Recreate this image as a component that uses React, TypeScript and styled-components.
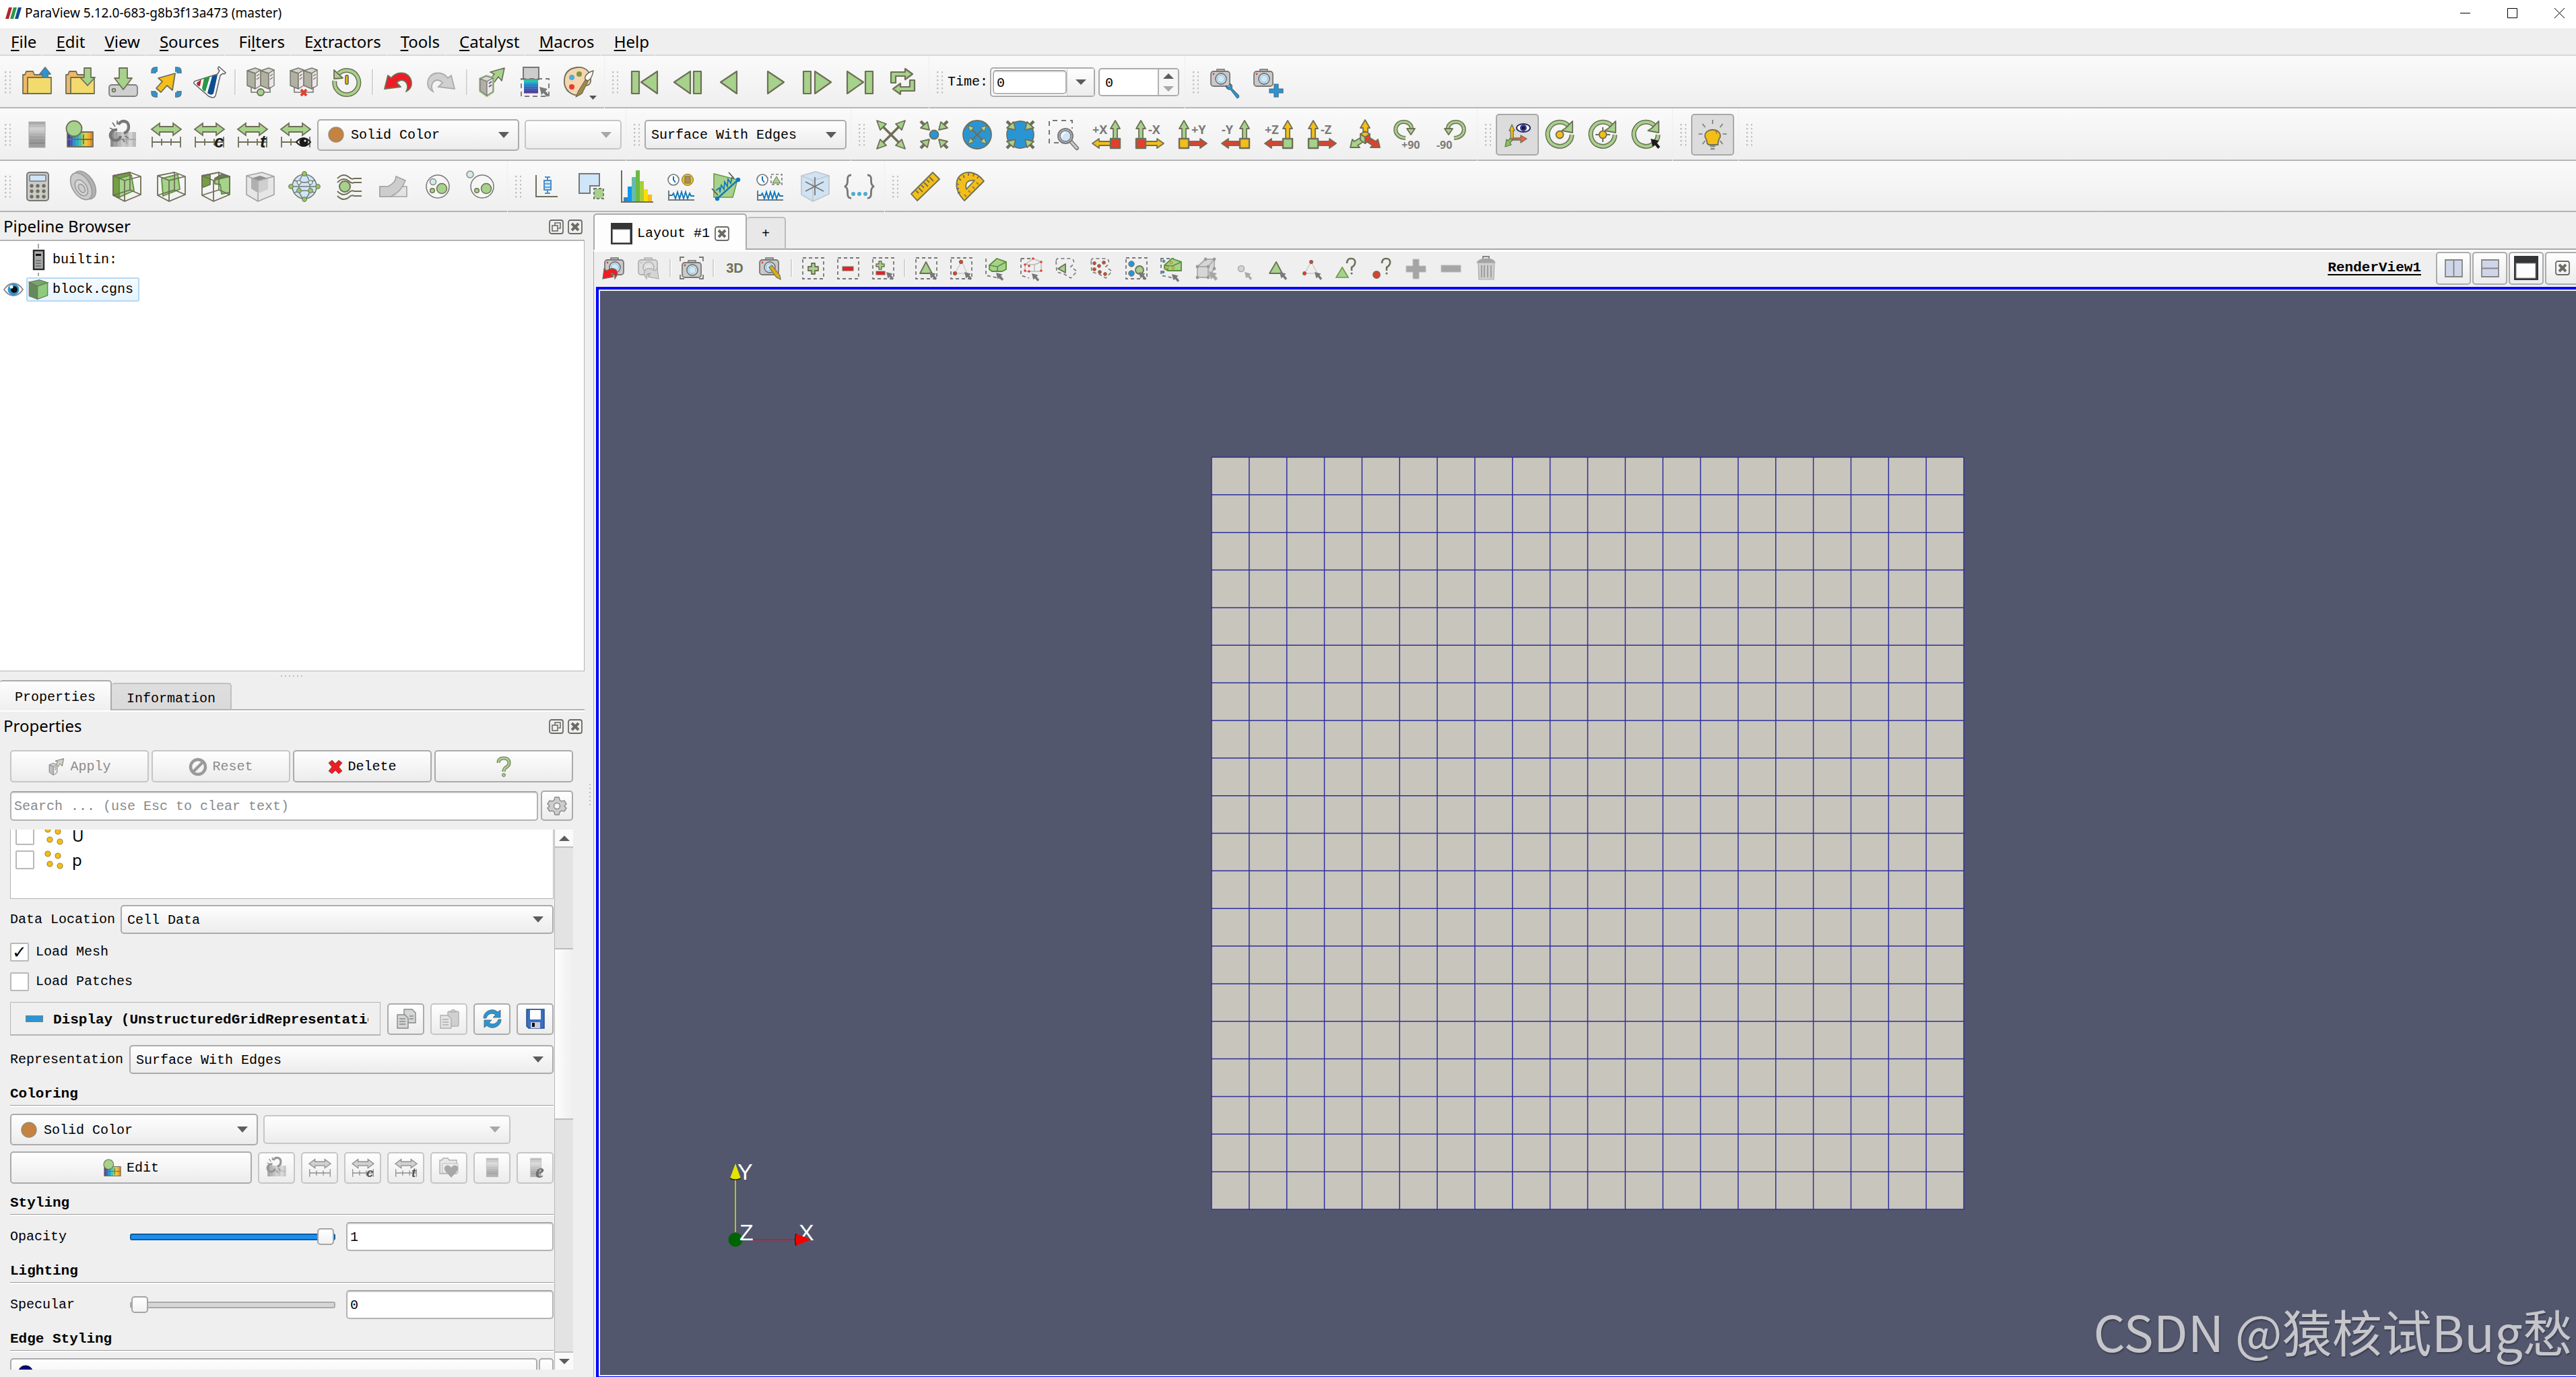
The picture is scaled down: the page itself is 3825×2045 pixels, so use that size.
import React from "react";
import styled, { createGlobalStyle, css } from "styled-components";

const OL = "#6f6f58";
const GR = "#a6d28b";
const BL = "#2a95d5";
const YE = "#f4be18";
const RE = "#e23f2e";
const MONO = `"Liberation Mono", "Noto Sans CJK SC", monospace`;
const UI = `"Noto Sans", "Open Sans", "Noto Sans CJK SC", sans-serif`;

const Global = createGlobalStyle`
  * { box-sizing: border-box; }
  html, body { margin: 0; padding: 0; }
  body { background: #efefef; color: #000; font-family: ${MONO}; font-size: 20px; line-height: 24px; }
  button, input, select { font: inherit; color: inherit; margin: 0; }
`;

/* ---------- shell ---------- */

const Window = styled.div`
  display: flex;
  flex-direction: column;
  height: 100vh;
  overflow: hidden;
  background: #efefef;
`;

const TitleBar = styled.header`
  display: flex;
  align-items: center;
  height: 42px;
  flex: none;
  padding: 0 0 4px 8px;
  gap: 5px;
  background: #fff;
  font-family: ${UI};
`;

const TitleText = styled.h1`
  margin: 0;
  flex: 1;
  font-size: 19px;
  font-weight: 400;
`;

const WindowButton = styled.button`
  width: 65px;
  height: 38px;
  padding: 0;
  border: 0;
  background: none;
  display: flex;
  align-items: center;
  justify-content: center;
  &:last-child { width: 50px; margin-left: 7px; }
`;

const MenuBar = styled.nav`
  display: flex;
  flex: none;
  height: 41px;
  font-family: ${UI};
  font-size: 24px;
`;

const MenuItem = styled.button`
  border: 0;
  border-bottom: 2px solid #d8d8d8;
  background: none;
  margin-right: 1px;
  padding: 0 8px 0 20px;
  &:first-child { padding-left: 16px; }
  u { text-underline-offset: 3px; text-decoration-thickness: 2px; }
`;

const MenuFill = styled.div`
  flex: 1;
  border-bottom: 2px solid #d8d8d8;
`;

const ToolRow = styled.div<{ $short?: boolean }>`
  display: flex;
  flex: none;
  height: ${(p) => (p.$short ? 76 : 78)}px;
`;

const Group = styled.div<{ $wide?: boolean }>`
  display: flex;
  align-items: center;
  padding: 2px ${(p) => (p.$wide ? 4 : 6)}px 0 11px;
  margin-right: 1px;
  border-bottom: 2px solid #b5b5b5;
  background: linear-gradient(#fafafa, #efefef);
  &:first-child { padding-left: 7px; }
  &:last-child { flex: 1; margin-right: 0; }
  --tool: ${(p) => (p.$wide ? 66 : 64)}px;
`;

const Handle = styled.span`
  flex: none;
  width: 9px;
  height: 33px;
  margin-right: 7px;
  background-image: radial-gradient(circle at 1px 1px, #c0c0c0 1px, transparent 2px);
  background-size: 7px 6px;
`;

const ToolButton = styled.button<{ $on?: boolean }>`
  flex: none;
  width: var(--tool);
  height: 62px;
  padding: 0;
  display: flex;
  align-items: center;
  justify-content: center;
  border: 2px solid transparent;
  border-radius: 5px;
  background: none;
  ${(p) => p.$on && css`border-color: #a9a9a9; background: #dcdcdc;`}
`;

const Divider = styled.span<{ $h?: number }>`
  flex: none;
  width: 12px;
  height: ${(p) => p.$h || 38}px;
  background: linear-gradient(90deg, transparent 5px, #d3d3d3 5px, #d3d3d3 7px, #fff 7px, #fff 8px, transparent 8px);
`;

const Icon = styled.svg`
  display: block;
  flex: none;
  overflow: visible;
`;

/* ---------- form parts ---------- */

const raised = css`
  border: 2px solid #ababab;
  border-radius: 5px;
  background: linear-gradient(#fefefe, #ececec);
`;

const SelectBox = styled.div<{ $w?: number; $h?: number; $off?: boolean }>`
  display: grid;
  grid-template-columns: minmax(0, 1fr);
  align-items: center;
  flex: ${(p) => (p.$w ? "none" : "1")};
  width: ${(p) => (p.$w ? p.$w + "px" : "auto")};
  height: ${(p) => p.$h || 44}px;
  ${raised}
  ${(p) => p.$off && css`border-color: #c6c6c6;`}
  > * { grid-area: 1 / 1; }
  > svg { margin-left: 14px; pointer-events: none; }
  &::after {
    content: "";
    grid-area: 1 / 1;
    justify-self: end;
    margin-right: 13px;
    border: 8px solid transparent;
    border-bottom: 0;
    border-top: 9px solid ${(p) => (p.$off ? "#a8a8a8" : "#5c5c5c")};
    pointer-events: none;
  }
`;

const Select = styled.select<{ $inset?: number }>`
  appearance: none;
  width: 100%;
  height: 100%;
  border: 0;
  background: none;
  padding: 2px 32px 0 ${(p) => p.$inset || 8}px;
`;

const Dot = () => (
  <Icon width="24" height="24" viewBox="0 0 24 24"><circle cx="12" cy="12" r="11" fill="#c58240" stroke="#9a8c76" strokeWidth="1.5" /></Icon>
);

const Combo = ({ label, value, w, h, off, dot }: any) => (
  <SelectBox $w={w} $h={h} $off={off}>
    <Select aria-label={label} id={label} disabled={off} $inset={dot ? 48 : 8} defaultValue={value}>
      <option>{value}</option>
    </Select>
    {dot && <Dot />}
  </SelectBox>
);

const Field = styled.input<{ $w?: number; $h?: number }>`
  width: ${(p) => (p.$w ? p.$w + "px" : "auto")};
  height: ${(p) => p.$h || 43}px;
  flex: ${(p) => (p.$w ? "none" : "1")};
  min-width: 0;
  padding: 2px 4px 0;
  border: 2px solid #b3b3b3;
  border-top-color: #a3a3a3;
  border-radius: 5px;
  background: #fff;
  box-shadow: inset 0 2px 0 #f0f0f0;
  &::placeholder { color: #8a8a8a; opacity: 1; }
`;

const Button = styled.button`
  ${raised}
  display: flex;
  align-items: center;
  justify-content: center;
  gap: 7px;
  flex: 1;
  height: 48px;
  padding: 2px 0 0;
  &:disabled { border-color: #c6c6c6; color: #8c8c8c; }
`;

const SmallButton = styled(Button)`
  flex: none;
  width: 55px;
  height: 47px;
  padding: 0;
  &:disabled svg { filter: grayscale(1); opacity: 0.75; }
`;

const GearButton = styled(SmallButton)`
  width: 48px;
  height: 45px;
`;

const CheckBox = styled.input.attrs({ type: "checkbox" })`
  appearance: none;
  flex: none;
  width: 28px;
  height: 28px;
  border: 2px solid #b9b9b9;
  border-radius: 2px;
  background: #fff;
  display: grid;
  place-items: center;
  &:checked::after { content: "✓"; font: bold 26px/20px "DejaVu Sans", sans-serif; }
`;

const TimeBox = styled.div`
  display: flex;
  align-items: center;
  width: 156px;
  height: 44px;
  margin: 0 5px 0 3px;
  padding-left: 2px;
  ${raised}
  background: #fff;
`;

const TimeDrop = styled.button`
  flex: 1;
  height: 40px;
  padding: 0;
  border: 0;
  border-left: 1px solid #c8c8c8;
  background: linear-gradient(#fefefe, #ececec);
  display: grid;
  place-items: center;
`;

const Spin = styled.div`
  display: flex;
  width: 120px;
  height: 42px;
  margin-right: 2px;
  ${raised}
  background: #fff;
  overflow: hidden;
`;

const SpinInput = styled.input`
  flex: 1;
  min-width: 0;
  border: 0;
  padding: 4px 8px 0;
  background: none;
`;

const SpinArrows = styled.div`
  display: grid;
  width: 30px;
  border-left: 2px solid #b4b4b4;
  background: #f6f6f6;
`;

const SpinButton = styled.button`
  border: 0;
  padding: 0;
  background: none;
  display: grid;
  place-items: center;
`;

const Tri = ({ up, c = "#5c5c5c", s = 16 }: any) => (
  <Icon width={s} height={s / 2} viewBox="0 0 16 8"><path d={up ? "M8 0l8 8H0z" : "M0 0h16l-8 8z"} fill={c} /></Icon>
);

/* ---------- docks ---------- */

const Body = styled.div`
  display: flex;
  flex: 1;
  min-height: 0;
`;

const Dock = styled.aside`
  display: flex;
  flex-direction: column;
  flex: none;
  width: 868px;
`;

const Pane = styled.section<{ $grow: number }>`
  display: flex;
  flex-direction: column;
  flex: ${(p) => p.$grow} 1 0;
  min-height: 0;
`;

const PaneHead = styled.div`
  display: flex;
  align-items: center;
  flex: none;
  height: 41px;
  gap: 6px;
  padding: 2px 3px 0 5px;
`;

const PaneTitle = styled.h2`
  flex: 1;
  margin: 0;
  padding-bottom: 1px;
  font-family: ${UI};
  font-size: 24px;
  font-weight: 400;
`;

const TinyButton = styled.button`
  display: block;
  flex: none;
  padding: 0;
  border: 0;
  background: none;
`;

const Tree = styled.ul`
  flex: 1;
  margin: 0;
  padding: 10px 0 0;
  list-style: none;
  border: solid #b5b5b5;
  border-width: 2px 1px 1px 0;
  background: #fff;
`;

const TreeRow = styled.li`
  display: flex;
  align-items: center;
  height: 36px;
  margin-bottom: 8px;
  padding-left: 5px;
`;

const EyeSlot = styled.span`
  width: 34px;
`;

const TreeItem = styled.span<{ $on?: boolean }>`
  display: flex;
  align-items: center;
  gap: 6px;
  height: 36px;
  padding: 0 7px 0 1px;
  border: 2px solid transparent;
  border-radius: 3px;
  ${(p) => p.$on && css`border-color: #b5d8f3; background: linear-gradient(#f6fbff, #e6f4ff);`}
`;

const SplitterH = styled.div`
  display: grid;
  place-items: center;
  flex: none;
  height: 13px;
  &::before {
    content: "";
    width: 34px;
    height: 2px;
    background: repeating-linear-gradient(90deg, #bdbdbd 0 2px, transparent 2px 6px);
  }
`;

const SplitterV = styled.div`
  display: grid;
  align-content: center;
  justify-content: end;
  padding-right: 4px;
  flex: none;
  width: 13px;
  &::before {
    content: "";
    width: 2px;
    height: 33px;
    background: repeating-linear-gradient(#bdbdbd 0 2px, transparent 2px 6px);
  }
`;

const Tabs = styled.div`
  display: flex;
  align-items: flex-end;
  flex: none;
  height: 47px;
  border-bottom: 2px solid #fff;
  box-shadow: inset 0 -2px 0 #b5b5b5;
`;

const Tab = styled.button<{ $on?: boolean; $w: number }>`
  width: ${(p) => p.$w}px;
  height: 45px;
  padding: 4px 0 0;
  border: 2px solid #ababab;
  border-left-width: 0;
  border-bottom: 0;
  border-radius: 4px 5px 0 0;
  background: linear-gradient(#fdfdfd, #efefef);
  ${(p) => !p.$on && css`
    height: 41px;
    padding-top: 6px;
    border-color: #c0c0c0;
    border-bottom: 2px solid #b5b5b5;
    background: linear-gradient(#dedede, #dadada);
  `}
`;

const Stack = styled.div`
  display: flex;
  flex-direction: column;
  flex: 1;
  min-height: 0;
  padding: 16px 17px 11px 15px;
`;

const Row = styled.div<{ $gap?: number; $mt?: number }>`
  display: flex;
  align-items: center;
  flex: none;
  gap: ${(p) => p.$gap ?? 4}px;
  margin-top: ${(p) => p.$mt ?? 0}px;
`;

const Scroll = styled.div`
  display: flex;
  flex: 1;
  min-height: 0;
  margin-top: 13px;
  overflow: hidden;
`;

const ScrollBody = styled.div`
  flex: 1;
  min-width: 0;
  overflow: hidden;
`;

const Bar = styled.div`
  display: flex;
  flex-direction: column;
  flex: none;
  width: 28px;
  margin-left: 1px;
  border-left: 1px solid #b5b5b5;
  background: #e3e3e3;
`;

const BarEnd = styled.button`
  display: grid;
  place-items: center;
  flex: none;
  height: 27px;
  padding: 0;
  border: 0;
  border-bottom: 2px solid #bdbdbd;
  background: #fafafa;
  &:last-child { border-bottom: 0; border-top: 2px solid #bdbdbd; }
`;

const Thumb = styled.div`
  flex: 252 1 0;
  border: solid #bdbdbd;
  border-width: 2px 0;
  background: linear-gradient(90deg, #fdfdfd, #efefef);
`;

const Gap = styled.div<{ $grow: number }>`
  flex: ${(p) => p.$grow} 1 0;
`;

const ArrayList = styled.div`
  display: flex;
  flex-direction: column;
  justify-content: flex-end;
  height: 103px;
  padding: 0 0 39px 7px;
  overflow: hidden;
  border: solid #b5b5b5;
  border-width: 0 1px 1px;
  background: #fff;
`;

const ArrayRow = styled.label`
  display: flex;
  align-items: center;
  flex: none;
  height: 36px;
  gap: 14px;
  font-family: ${UI};
  font-size: 24px;
`;

const CheckRow = styled.label`
  display: flex;
  align-items: center;
  height: 44px;
  gap: 10px;
`;

const Fill = styled.div`
  flex: 1;
`;

const Section = styled.h3`
  margin: 0;
  padding-bottom: 3px;
  font-size: 21px;
  line-height: 26px;
  font-weight: 700;
  border-bottom: 1px solid #9d9d9d;
  box-shadow: 0 2px 0 #fff;
`;

const Expander = styled.button`
  display: flex;
  align-items: center;
  gap: 15px;
  flex: 1;
  min-width: 0;
  height: 50px;
  padding: 0 17px 0 22px;
  margin-right: 1px;
  border: 1px solid #b5b5b5;
  border-bottom-width: 2px;
  background: none;
  font-size: 21px;
  font-weight: 700;
  white-space: nowrap;
  span { overflow: hidden; padding-top: 4px; }
`;

const SliderLabel = styled.label`
  width: 178px;
  flex: none;
`;

const Slider = styled.input.attrs({ type: "range" })<{ $full?: boolean }>`
  appearance: none;
  flex: none;
  width: 305px;
  height: 26px;
  margin: 0 16px 0 0;
  background: none;
  &::-webkit-slider-runnable-track {
    height: 10px;
    border: 2px solid ${(p) => (p.$full ? "#0a5c9e" : "#ababab")};
    border-radius: 3px;
    background: ${(p) => (p.$full ? "#1d8df0" : "#d6d6d6")};
  }
  &::-webkit-slider-thumb {
    appearance: none;
    width: 25px;
    height: 25px;
    margin-top: -10px;
    border: 2px solid #a5a5a5;
    border-radius: 5px;
    background: linear-gradient(#fff, #f1f1f1);
  }
`;

const EdgeDot = styled.svg`
  align-self: flex-start;
  margin: 6px auto 0 9px;
`;

const EdgeMore = styled(Button)`
  flex: none;
  width: 22px;
`;

/* ---------- render view ---------- */

const Main = styled.main`
  display: flex;
  flex-direction: column;
  flex: 1;
  min-width: 0;
`;

const ViewTabs = styled.div`
  display: flex;
  align-items: flex-end;
  flex: none;
  height: 56px;
  box-shadow: inset 0 -2px 0 #a9a9a9;
`;

const ViewTab = styled.div<{ $on?: boolean }>`
  display: flex;
  align-items: center;
  justify-content: center;
  gap: 7px;
  height: ${(p) => (p.$on ? 54 : 49)}px;
  width: ${(p) => (p.$on ? 228 : 58)}px;
  padding-top: ${(p) => (p.$on ? 4 : 2)}px;
  border: 2px solid ${(p) => (p.$on ? "#ababab" : "#bdbdbd")};
  border-radius: 5px 5px 0 0;
  border-bottom: ${(p) => (p.$on ? "0" : "2px solid #a9a9a9")};
  border-left-width: ${(p) => (p.$on ? 2 : 0)}px;
  background: ${(p) => (p.$on ? "#fdfdfd" : "#e8e8e8")};
`;

const Frame = styled.div`
  display: flex;
  flex-direction: column;
  flex: 1;
  min-height: 0;
  border-left: 1px solid #a9a9a9;
  border-top: 3px solid #fdfdfd;
  padding-left: 3px;
`;

const ViewTools = styled.div`
  display: flex;
  align-items: center;
  flex: none;
  height: 52px;
  padding-bottom: 4px;
  overflow: hidden;
`;

const ViewTool = styled.button`
  display: grid;
  place-items: center;
  flex: none;
  width: 52px;
  height: 46px;
  padding: 0;
  border: 0;
  background: none;
  color: ${OL};
  font: bold 20px/24px "Liberation Sans", sans-serif;
`;

const ViewName = styled.a`
  margin-left: auto;
  margin-right: 22px;
  color: #000;
  font-weight: 700;
  font-size: 21px;
  text-decoration-thickness: 2px;
  text-underline-offset: 4px;
`;

const FrameButton = styled(Button)`
  flex: none;
  width: 52px;
  height: 49px;
  padding: 0;
  margin-right: 2px;
  &:last-child { margin-right: -6px; }
`;

const Viewport = styled.div`
  position: relative;
  flex: 1;
  min-height: 0;
  border: 4px solid #0000fe;
  border-width: 4px 0 1px 4px;
  box-shadow: inset 2px 2px 0 #f0f0f4, inset 0 -2px 0 #f0f0f4;
  background: #52576e;
  display: flex;
  align-items: center;
  justify-content: center;
  overflow: hidden;
`;

const Axes = styled.svg`
  position: absolute;
  left: 171px;
  bottom: 184px;
  overflow: visible;
`;

const Watermark = styled.div`
  position: absolute;
  right: 5px;
  bottom: 16px;
  font: 400 74px/104px "Noto Sans CJK SC", sans-serif;
  color: #c6c6ca;
  text-shadow: 1px 2px 2px rgba(40, 42, 56, 0.6);
  white-space: nowrap;
`;

/* ---------- icon drawings (44 x 44) ---------- */

const st = { stroke: OL, strokeWidth: 1.8, strokeLinejoin: "round" as const };
const Arc = ({ d, w = 4.5, c = GR }: any) => (
  <g fill="none"><path d={d} stroke={OL} strokeWidth={w + 3} /><path d={d} stroke={c} strokeWidth={w} /></g>
);
const Cursor = ({ x, y, s = 1, c = "#787878" }: any) => (
  <path transform={`translate(${x} ${y}) scale(${s})`} fill={c} d="M0 0l12 3-3 3 5 6-3 3-5-6-3 3z" />
);
const Clock = ({ x, y, r = 8 }: any) => (
  <g fill="none"><circle cx={x} cy={y} r={r} fill="#fff" stroke="#777" strokeWidth="1.6" /><path d={`M${x} ${y - 5}v5l3 4`} stroke="#0f74bd" strokeWidth="2" /></g>
);
const Wave = ({ y = 28 }: any) => (
  <g fill="none"><path d={`M3 ${y}v14h38`} stroke="#777" strokeWidth="2" /><path d={`M4 ${y + 7}h4l2-3 3 8 3-10 3 10 3-10 3 10 3-10 3 10 3-8 2 4h5`} stroke="#1277bd" strokeWidth="1.9" /></g>
);
const Camera = ({ x = 0, y = 4, off }: any) => (
  <g transform={`translate(${x} ${y})`} opacity={off ? 0.5 : 1}>
    <rect x="10" y="-1" width="11" height="5" fill="#c6c6c6" stroke="#777" strokeWidth="1.6" />
    <rect x="1" y="2" width="28" height="22" rx="4" fill="#cacaca" stroke="#777" strokeWidth="1.8" />
    <circle cx="16" cy="13" r="8" fill="#f2f2f2" stroke="#777" strokeWidth="1.8" />
    <circle cx="16" cy="13" r="5.4" fill={off ? "#ddd" : "#cfe7fa"} stroke={off ? "#aaa" : "#6bb8dd"} />
    <circle cx="5" cy="6" r="1.4" fill={off ? "#999" : RE} />
  </g>
);
const Server = ({ x = 0 }: any) => (
  <g transform={`translate(${x} 0)`} stroke="#777767" strokeWidth="1.4" strokeLinejoin="round">
    <path d="M2 5l12-4 8 3-8 5z" fill="#d4d4d4" /><path d="M2 5l12 4v23L2 27z" fill="#b0b0a3" /><path d="M14 9l8-5v23l-8 5z" fill="#eee6ea" />
    <path d="M16 13l4-3M16 18l4-3" />
  </g>
);
const MiniServer = ({ c = GR, g = "#b0b0a3" }: any) => (
  <g>
    <path d="M14 23L25 10l-6-3 21-6-4 19-5-6-9 12z" fill={c} {...st} strokeWidth="1.6" />
    <path d="M4 17l9-4 10 3v20l-9 6-10-7z" fill="none" stroke={c} strokeWidth="4" strokeLinejoin="round" />
    <path d="M4 17l9-4 10 3-9 5z" fill="#d8d8d8" stroke="#777" strokeWidth="1.2" /><path d="M4 17l10 4v21L4 35z" fill={g} stroke="#777" strokeWidth="1.2" /><path d="M14 21l9-5v20l-9 6z" fill="#eee8ea" stroke="#777" strokeWidth="1.2" />
    <path d="M17 24l4-3M17 29l4-3" stroke="#555" strokeWidth="1.6" />
  </g>
);
const DoubleArrow = ({ c = GR, o = OL }: any) => (
  <g>
    <path d="M0 14L12 5v5h20V5l12 9-12 9v-5H12v5z" fill={c} stroke={o} strokeWidth="1.8" />
    <path d="M1 33h42M1 25v16M43 25v16M15 28v10M29 28v10" stroke={o} strokeWidth="1.8" fill="none" />
  </g>
);
const Letter = ({ t, x = 31 }: any) => (
  <text x={x} y="41" fontFamily="Liberation Sans" fontWeight="700" fontStyle="italic" fontSize="26" fill="#1e1e1e">{t}</text>
);
const Rainbow = () => (
  <g>
    {["#4a3a9a", "#3a5fb8", "#2a8fd0", "#25b0c8", "#5bbf9a", "#a6cb60", "#e0cc3c", "#f2ae28", "#e88828"].map((c, i) => (
      <rect key={c} x={3 + i * 4.2} y="18" width="4.4" height="22" fill={c} />
    ))}
    <rect x="3" y="18" width="38" height="22" fill="none" {...st} />
    <path d="M3 29h38M27 22v14" stroke={OL} strokeWidth="1.8" />
    <circle cx="13" cy="13" r="11.5" fill={GR} {...st} />
  </g>
);
const Chain = () => (
  <g fill="none">
    {[0, 1, 2, 3, 4, 5, 6].map((i) => <rect key={i} x={3 + i * 5.4} y="18" width="5.6" height="22" fill={["#8f8f8f", "#a2a2a2", "#b6b6b6", "#c9c9c9", "#c0c0c0", "#d2d2d2", "#bcbcbc"][i]} />)}
    <path d="M3 29h38M27 22v14" stroke="#a0a0a0" strokeWidth="1.6" />
    <path d="M15 7c4-8 16-6 15 4 0 5-4 8-7 9M13 15C5 14 0 22 5 28c5 5 12 2 13-4" stroke="#777" strokeWidth="4.4" />
    <path d="M2 12l6 3M6 4l4 6M13 1v6M24 24l6 3M21 28l3 5" stroke="#777" strokeWidth="1.8" />
  </g>
);
const LutBar = ({ x = 10, w = 24 }: any) => (
  <g>
    {[0, 1, 2, 3, 4, 5, 6, 7, 8].map((i) => <rect key={i} x={x} y={3 + i * 4.2} width={w} height="4.4" fill={["#ababab", "#bdbdbd", "#cfcfcf", "#c4c4c4", "#b2b2b2", "#a4a4a4", "#989898", "#8c8c8c", "#9c9c9c"][i]} />)}
    <rect x={x} y="3" width={w} height="38" fill="none" stroke="#a8a8a8" />
  </g>
);
const Flip = ({ children }: any) => <g transform="translate(44 0) scale(-1 1)">{children}</g>;
const Corners = ({ children }: any) => (
  <g>
    {children}
    <g transform="translate(44 0) scale(-1 1)">{children}</g>
    <g transform="translate(0 44) scale(1 -1)">{children}</g>
    <g transform="translate(44 44) scale(-1 -1)">{children}</g>
  </g>
);
const OutArrow = () => <g><path d="M22 22L7 7" stroke={OL} strokeWidth="3.6" /><path d="M1 1l14 5-9 9z" fill={GR} {...st} /></g>;
const InArrow = () => <g><path d="M2 2l6 6" stroke={OL} strokeWidth="4.5" /><path d="M15 15L2 12 12 3z" fill={GR} {...st} /></g>;
const ViewDir = ({ t, left, up, box, out }: any) => {
  const art = (
    <g {...st}>
      <path d="M1 35l10-7v4h17v6H11v4z" fill={out} />
      <path d="M35 1l7 12h-4v15h-6V13h-4z" fill={up} />
      <rect x="28" y="28" width="14" height="14" fill={box} strokeWidth="2.4" />
    </g>
  );
  return (
    <g>
      {left ? art : <Flip>{art}</Flip>}
      <text x={left ? 1 : 20} y="21" fontFamily="Noto Sans" fontWeight="700" fontSize="18" fill="#7c7c7c">{t}</text>
    </g>
  );
};
const Swirl = ({ children }: any) => (
  <g><Arc d="M35 10A18 18 0 1 0 39 22" w={4} /><path d="M40 2v17l-16-3 6-4z" fill={GR} {...st} />{children}</g>
);
const cubeWire = "M2 6l25-5 16 6v27L19 44 2 35zM2 6l17 7 24-6M19 13v31M27 1v26M2 35l25-8 16 7";

const I: Record<string, React.ReactNode> = {
  open: <g {...st}><path d="M1 39V11h3l2-5h10l2 5h13v28z" fill="#f0b865" /><rect x="8" y="15" width="35" height="24" fill="#f3da6d" /><path d="M34 0l8 10h-4v5h-8v-5h-4z" fill={BL} stroke="#5d7b80" /></g>,
  recent: <g {...st}><path d="M1 39V11h3l2-5h10l2 5h13v28z" fill="#f0b865" /><rect x="8" y="15" width="35" height="24" fill="#f3da6d" /><path d="M28 1h10v14h6L33 27 22 15h6z" fill={GR} /></g>,
  save: <g {...st}><rect x="1" y="26" width="42" height="17" rx="4" fill="#d0d0d0" stroke="#808080" /><circle cx="8" cy="34" r="2.4" fill="none" /><path d="M16 1h12v15h7L22 33 9 16h7z" fill={GR} /></g>,
  full: <g><Corners><path d="M3 9V6q0-3 3-3h3" fill="none" stroke={OL} strokeWidth="7.4" /><path d="M3 8.500V6q0-3 3-3h2.500" fill="none" stroke={BL} strokeWidth="5" /></Corners><path d="M35 9L10 16l6 5-9 10 7 6 9-10 8 7z" fill={YE} {...st} /></g>,
  flask: <g><path d="M36-1l10 9q-2 3-4 1l-4 3-7 30q-2 5-10 1L-1 24q-1-3 3-4l32-10 3-5q-4-3-1-6z" fill="#fff" stroke="#666" strokeWidth="1.6" /><path d="M3 23l7-5-2 10q-5 0-5-5z" fill="#b5242c" /><path d="M14 16l9-3-7 23q-4-1-5-5z" fill="#2b9747" /><path d="M26 13l8-2-6 28q-4 4-9-1z" fill="#0f4d91" /></g>,
  connect: <g><Server /><Server x={20} /><path d="M8 29v8h28v-8" fill="none" stroke="#777" strokeWidth="1.6" /><circle cx="22" cy="37" r="5" fill={GR} {...st} /></g>,
  disconnect: <g><Server /><Server x={20} /><path d="M8 29v8h28v-8" fill="none" stroke="#777" strokeWidth="1.6" /><path d="M18 33l8 9M26 33l-8 9" stroke={RE} strokeWidth="4" /></g>,
  reload: <g><Arc d="M10 9A18 18 0 1 1 4 20" w={4} /><path d="M3 17V4l13 12z" fill={GR} {...st} /><rect x="20" y="12" width="4" height="13" rx="1.500" fill={YE} {...st} /></g>,
  undo: <path d="M2 32L7 12l5 4C21 3 42 7 42 24c0 7-4 10-8 12 5-9 0-17-7-17-4 0-5 2-7 4l6 6z" fill="#ee1c25" {...st} />,
  redo: <Flip><path d="M2 32L7 12l5 4C21 3 42 7 42 24c0 7-4 10-8 12 5-9 0-17-7-17-4 0-5 2-7 4l6 6z" fill="#d0d0d0" stroke="#ababab" strokeWidth="1.800" /></Flip>,
  apply: <MiniServer />,
  search: <g><rect x="4" y="0" width="23" height="18" fill="#cccdcd" stroke="#777" strokeWidth="2" />{["#2bc0a0", "#23a5c4", "#1f86c8", "#2a6cb8", "#4a52a8", "#5c3c98"].map((c, i) => <rect key={c} x="5" y={18 + i * 3.4} width="21" height="3.600" fill={c} />)}<path d="M1 17h41v26H1z" fill="none" stroke="#777" strokeWidth="1.800" strokeDasharray="7 5" /><Cursor x={28} y={29} c="#7a7a7a" /></g>,
  palette: <g><path d="M20 0C4 2 0 12 1 24c2 14 18 22 26 14 3-3-2-6 0-9 3-3 12 0 13-8C41 8 34-1 20 0z" fill="#f5d6b0" {...st} /><circle cx="23" cy="10" r="4" fill="#7d9a42" /><circle cx="12" cy="15" r="4" fill="#45b2de" /><circle cx="12" cy="29" r="4" fill={RE} /><path d="M18 44l4-9 10-16 4 2-9 18z" fill="#a58845" {...st} strokeWidth="1.300" /><path d="M32 18q-2-8 12-13-2 12-8 15z" fill="#fff" {...st} strokeWidth="1.500" /><path d="M38 42h11l-5.500 6z" fill="#555" /></g>,
  first: <g fill={GR} {...st} strokeWidth="2.200"><rect x="3" y="6" width="11" height="33" /><path d="M17 22L41 6v33z" /></g>,
  prev: <g fill={GR} {...st} strokeWidth="2.200"><rect x="31" y="6" width="11" height="33" /><path d="M2 22L26 6v33z" /></g>,
  back: <path d="M7 22L31 6v33z" fill={GR} {...st} strokeWidth="2.200" />,
  play: <path d="M37 22L13 6v33z" fill={GR} {...st} strokeWidth="2.200" />,
  next: <g fill={GR} {...st} strokeWidth="2.200"><rect x="2" y="6" width="11" height="33" /><path d="M43 22L19 6v33z" /></g>,
  last: <g fill={GR} {...st} strokeWidth="2.200"><rect x="30" y="6" width="11" height="33" /><path d="M27 22L3 6v33z" /></g>,
  loop: <g fill={GR} {...st} strokeWidth="2.200"><path d="M4 23V7h21V2l11 8-11 8v-5H11v10z" /><path d="M39 19v16H18v5L7 32l11-8v5h14V19z" /></g>,
  camAdjust: <g><Camera /><path d="M29 24q5 2 3 7l10 10q2 4-2 5l-10-13q-6 1-7-6l4 3 3-2z" fill={BL} stroke="#456" strokeWidth="1" /></g>,
  camAdd: <g><Camera /><path d="M31 25h6v7h7v6h-7v6h-6v-6h-7v-6h7z" fill={BL} stroke="#4a6a80" strokeWidth="1.200" /></g>,

  lut: <LutBar />,
  editLut: <Rainbow />,
  chain: <Chain />,
  rescale: <DoubleArrow />,
  rescaleC: <g><DoubleArrow /><Letter t="c" x={29} /></g>,
  rescaleT: <g><DoubleArrow /><Letter t="t" x={33} /></g>,
  rescaleV: <g><DoubleArrow /><path d="M23 33q11-12 21 0-10 12-21 0z" fill="#fff" stroke="#222" strokeWidth="2" /><circle cx="34" cy="33" r="6.500" fill="#1a1a1a" /><circle cx="36" cy="31" r="1.500" fill="#fff" /></g>,
  reset: <Corners><OutArrow /></Corners>,
  closest: <g><Corners><InArrow /></Corners><circle cx="22" cy="22" r="6.500" fill={BL} {...st} /></g>,
  zoomData: <g><circle cx="22" cy="22" r="21" fill={BL} {...st} /><g transform="translate(7.500 7.500) scale(.66)"><Corners><OutArrow /></Corners></g></g>,
  zoomClosest: <g><circle cx="22" cy="22" r="20" fill={BL} {...st} /><Corners><InArrow /></Corners></g>,
  zoomBox: <g fill="none"><path d="M15 34H1V1h34v12" stroke="#777" strokeWidth="2" strokeDasharray="7 6" /><path d="M33 32l9 10" stroke="#777" strokeWidth="6" strokeLinecap="round" /><path d="M33 32l9 10" stroke="#ccc" strokeWidth="3" strokeLinecap="round" /><circle cx="25" cy="24" r="11" fill="#c4c4c4" stroke="#777" strokeWidth="2" /><circle cx="25" cy="24" r="8" fill="#cfe6fa" stroke="#777" strokeWidth="1.500" /><path d="M20 25q0-6 5-6" stroke="#fff" strokeWidth="2" /></g>,
  px: <ViewDir t="+X" left up={GR} box={RE} out={YE} />,
  mx: <ViewDir t="-X" up={GR} box={RE} out={YE} />,
  py: <ViewDir t="+Y" up={GR} box={YE} out={RE} />,
  my: <ViewDir t="-Y" left up={GR} box={YE} out={RE} />,
  pz: <ViewDir t="+Z" left up={YE} box={GR} out={RE} />,
  mz: <ViewDir t="-Z" up={YE} box={GR} out={RE} />,
  iso: <g {...st}><path d="M22 0l7 12h-3v12h-7V12h-4z" fill={YE} /><path d="M0 41l3-12 3 3 10-6 4 6-9 6 3 3z" fill={GR} /><path d="M44 41l-3-12-3 3-10-6-4 6 9 6-3 3z" fill={RE} /><path d="M22 17l7 4-7 5-7-5z" fill={YE} /><path d="M15 21l7 5v9l-7-5z" fill={GR} /><path d="M29 21l-7 5v9l7-5z" fill={RE} /></g>,
  rotP: <g><Arc d="M18 27C-2 26 0 4 14 3c9-1 14 6 13 12" w={3} /><path d="M20 13h12l-6 9z" fill={GR} {...st} /><text x="12" y="43" fontFamily="Noto Sans" fontWeight="700" fontSize="16" fill="#7c7c7c">+90</text></g>,
  rotM: <g><Flip><Arc d="M18 27C-2 26 0 4 14 3c9-1 14 6 13 12" w={3} /><path d="M20 13h12l-6 9z" fill={GR} {...st} /></Flip><text x="0" y="43" fontFamily="Noto Sans" fontWeight="700" fontSize="16" fill="#7c7c7c">-90</text></g>,
  axes: <g {...st} strokeWidth="1.300"><path d="M4 40l2-11 2 2 5-5 3 3-5 5 2 3z" fill="#7ccc4c" /><path d="M14 27h13v-4l9 5-9 6v-4H14z" fill="#f4623c" /><path d="M14 7l4 9h-2v12h-4V16h-2z" fill={YE} /><ellipse cx="31" cy="12" rx="10" ry="6" fill="#fff" stroke="#2c2c60" strokeWidth="2" /><circle cx="31" cy="12" r="5" fill="#3b3ba0" stroke="none" /><circle cx="31" cy="12" r="2.500" fill="#181830" stroke="none" /></g>,
  centerAxes: <Swirl><circle cx="21" cy="22" r="5.500" fill={YE} {...st} /></Swirl>,
  resetCenter: <Swirl><path d="M21 11v22M10 22h22" stroke={OL} strokeWidth="2" /><circle cx="21" cy="22" r="5.500" fill={YE} {...st} /></Swirl>,
  pickCenter: <Swirl><Cursor x={28} y={28} c="#1c1c1c" /></Swirl>,
  bulb: <g><path d="M14 34q0-5-3-9C7 10 37 10 33 25q-3 4-3 9v2H16z" transform="translate(0 1)" fill={YE} {...st} /><path d="M22 0v6M7 6l4 5M37 6l-4 5M1 21h6M37 21h6M7 36l4-5M37 36l-4-5" stroke="#777" strokeWidth="1.600" /><path d="M18 39h8M19 43h6" stroke="#888" strokeWidth="2.400" /><path d="M24 15q4 1 4 6" stroke="#a08030" fill="none" strokeWidth="1.400" /></g>,

  calc: <g><rect x="6" y="1" width="32" height="42" rx="4" fill="#cbcbcb" stroke="#777" strokeWidth="2" /><rect x="10" y="5" width="24" height="9" rx="1" fill="#cfe5f8" stroke="#777" strokeWidth="1.500" />{[21, 29, 37].map((y) => [13, 22, 31].map((x) => <circle key={x + "-" + y} cx={x} cy={y} r="2.700" fill={OL} />))}</g>,
  contour: <g fill="none" stroke="#9a9a9a" strokeWidth="1.600" transform="rotate(-32 22 22)"><ellipse cx="26" cy="22" rx="14" ry="23" fill="#b2b2b2" /><ellipse cx="21" cy="21" rx="13" ry="22" fill="#cbcbcb" /><ellipse cx="20" cy="23" rx="8" ry="13" fill="#d5d5d5" /><ellipse cx="20" cy="24" rx="4" ry="7" fill="#cdcdcd" /></g>,
  clip: <g {...st}><path d="M2 6l25-5 2 26L11 38l-9-3z" fill="#74a042" /><path d="M11 10l18-5 4 23-22 10z" fill={GR} stroke="#5b8f3a" /><path d={cubeWire} fill="none" /></g>,
  slice: <g {...st}><path d="M8 10l24-6 3 22-25 10z" fill={GR} stroke="#5b8f3a" /><path d={cubeWire} fill="none" /></g>,
  thresh: <g {...st}><path d="M2 6l12-2v15l-10 4-2-2z" fill="#74a042" /><path d="M21 10l22-3v24l-12 2-2-14-8-1z" fill={GR} stroke="#5b8f3a" /><path d="M21 10l10-6 12 3z" fill="#5b8f3a" /><path d={cubeWire} fill="none" /></g>,
  subset: <g stroke="#a2a2a2" strokeWidth="1.600" strokeLinejoin="round"><path d="M2 6l23-5 18 6v27L19 44 2 34z" fill="#e6e6e6" /><path d="M9 10l13-4 12 4v16l-14 6-11-7z" fill="#cfcfcf" stroke="none" /><path d="M9 10l13-4 12 4-14 4z" fill="#8f8f8f" stroke="none" /><path d="M9 10l11 4v18L9 25z" fill="#b0b0b0" stroke="none" /><path d="M2 6l17 7 24-6M19 32v12" fill="none" /></g>,
  glyph: <g><circle cx="22" cy="22" r="18" fill="#cfe5f8" stroke="#6e7a70" strokeWidth="1.600" /><path d="M22 3C12 10 10 34 22 41 34 34 32 10 22 3M3 22h38M7 13q15 6 30 0M7 31q15-6 30 0" fill="none" stroke="#777" strokeWidth="1.500" />{[[22, 3], [2, 22], [42, 22], [22, 41], [14, 28], [31, 28]].map(([x, y]) => <circle key={x + "-" + y} cx={x} cy={y} r="3.400" fill="#8fcb64" stroke={OL} />)}{[[14, 16], [31, 16]].map(([x, y]) => <circle key={x} cx={x} cy={y} r="3" fill="#d6f0f6" stroke={OL} />)}</g>,
  stream: <g fill="none" stroke={OL} strokeWidth="2"><path d="M5 10q9-9 17-2 4 4 8 2h11M5 16q9-9 17-2 4 4 8 2h11M5 29q9 9 17 2 4-4 8-2h11M5 36q9 9 17 2 4-4 8-2h11" /><circle cx="16" cy="22" r="8" fill={GR} /></g>,
  warp: <g stroke="#a4a4a4" strokeWidth="1.600"><path d="M2 22h40v15H2z" fill="#e3e3e3" /><path d="M2 22h12Q26 16 26 7l14 6Q34 30 18 37H2z" fill="#cdcdcd" /></g>,
  group: <g {...st} strokeWidth="1.500"><circle cx="22" cy="22" r="17" fill="#f6f6f6" stroke="#777" /><circle cx="28" cy="25" r="7.500" fill={GR} /><circle cx="15" cy="15" r="4.500" fill="#d6ecec" stroke="#888" /><circle cx="14" cy="28" r="3.300" fill={GR} /></g>,
  level: <g {...st} strokeWidth="1.500"><circle cx="22" cy="22" r="17" fill="#f6f6f6" stroke="#777" /><circle cx="28" cy="25" r="7.500" fill={GR} /><circle cx="4" cy="4" r="5" fill="#d6ecec" stroke="#888" /><circle cx="14" cy="28" r="3.300" fill={GR} /></g>,
  box: <g fill="none"><path d="M4 5v32h32" stroke={OL} strokeWidth="2" /><path d="M21 8v24M17 8h8M17 32h8" stroke="#4a90c8" strokeWidth="2" /><rect x="16" y="13" width="10" height="14" fill="#cfe5f8" stroke="#4a90c8" strokeWidth="2" /><path d="M16 18h10M16 23h10" stroke="#4a90c8" strokeWidth="1.500" /></g>,
  extract: <g><path d="M2 3h30v18H18v11H2z" fill="#cfe5f8" stroke="#777" strokeWidth="2" /><rect x="24" y="25" width="14" height="15" fill={GR} stroke="#777" strokeWidth="2" strokeDasharray="4 3" /></g>,
  histo: <g>{[[2, 38, "#3f7fb8"], [8, 22, "#0a98ee"], [14, 8, "#66bcae"], [20, -2, "#6cba44"], [26, 14, "#aace3c"], [32, 26, "#fbdf08"], [38, 34, "#f8bb18"]].map(([x, y, c]: any) => <rect key={x} x={x} y={y} width="6" height={44 - y} fill={c} />)}<path d="M-1-2v47h47" fill="none" stroke={OL} strokeWidth="2" /></g>,
  plotTime: <g><Clock x={10} y={12} /><circle cx="31" cy="12" r="8.500" fill={YE} stroke={OL} /><rect x="27" y="7" width="8" height="10" fill="#aa9058" stroke={OL} /><Wave /></g>,
  plotLine: <g><path d="M4 3l35 9-7 26H4z" fill={GR} stroke="#6a9a48" strokeWidth="1.600" /><path d="M9 40L40 12" stroke="#1277bd" strokeWidth="2.400" /><circle cx="9" cy="40" r="3.200" fill="#1277bd" /><circle cx="40" cy="12" r="3.200" fill="#1277bd" /><path d="M7 28l5-4 1 7 2-11 4 6 1-11 4 7 1-11 4 6 2-9" fill="none" stroke="#1277bd" strokeWidth="1.700" /><path d="M1 25l9 10M26 1l8 9" stroke="#555" strokeWidth="1.700" /></g>,
  plotSel: <g><Clock x={10} y={12} /><rect x="23" y="4" width="16" height="15" fill="none" stroke="#777" strokeWidth="1.600" strokeDasharray="4 3" /><path d="M31 7l6 10H25z" fill={GR} stroke={OL} /><Wave /></g>,
  probe: <g><path d="M2 6l21-6 20 6v27L19 44 2 34z" fill="#cfe3f4" stroke="#c2c8cc" strokeWidth="1.800" /><path d="M2 6l17 7 24-7M19 13v31" stroke="#c2c8cc" fill="none" strokeWidth="1.600" /><path d="M22 8v27M8 15l27 14M35 15L8 29" stroke="#777" strokeWidth="1.800" /></g>,
  braces: <g fill="none"><path d="M10 5Q4 5 4.500 12q.5 9-4.500 10 5 1 4.500 10 0 8 5.500 7M34 5q6 0 5.500 7-.5 9 4.500 10-5 1-4.500 10 0 8-5.500 7" stroke="#777" strokeWidth="2.800" />{[13, 22, 31].map((x) => <circle key={x} cx={x} cy="33" r="3" fill="#4eacd0" />)}</g>,
  ruler: <g><path d="M33 1l10 10L10 43 1 33z" fill={YE} {...st} /><path d="M8 28l4 4M12 24l6 6M16 20l4 4M20 16l6 6M24 12l4 4M28 8l6 6" stroke={OL} strokeWidth="1.800" /></g>,
  protractor: <g><path d="M14 43C-6 22 2 0 22 1q12 1 21 13z" fill={YE} {...st} /><path d="M17 26q-4-14 12-13z" fill="#f4f4f4" {...st} /><path d="M4 32l4-2M2 25h4M2 18l4 1M6 10l3 3M12 5l2 4M20 2v4M28 3l-1 4M35 7l-2 3" stroke={OL} strokeWidth="1.800" /><path d="M17 37l-3-3M23 31l-3-3M29 25l-3-3M35 19l-3-3" stroke={OL} strokeWidth="1.500" /></g>,
};

/* ---------- view tool drawings (34 x 34) ---------- */

const dash = { fill: "none", stroke: "#777", strokeWidth: 1.8, strokeDasharray: "5 4" };
const Sel = () => <rect x="2" y="2" width="31" height="31" {...dash} />;
const Lasso = () => <path d="M2 6l2-3h22q6 6-2 12l9 7-9 10-10-6L3 23z" {...dash} strokeWidth={1.6} />;
const Quest = () => <path d="M18 10q0-7 6-7 7 0 6 7-1 4-5 6v5" fill="none" stroke={OL} strokeWidth="2.600" />;
const V: Record<string, React.ReactNode> = {
  camUndo: <g><Camera x={3} y={3} /><path d="M1 33l2-15 4 3q8-6 14-1 4 5-2 13 1-9-6-8l4 5z" fill="#ee1c25" stroke={OL} strokeWidth="1.200" /></g>,
  camRedo: <g><Camera x={1} y={3} off /><path d="M32 33l-2-15-4 3q-8-6-14-1-4 5 2 13-1-9 6-8l-4 5z" fill="#d4d4d4" stroke="#aaa" strokeWidth="1.200" /></g>,
  capture: <g><path d="M0 7V1h6M28 1h6v6M34 27v6h-6M6 33H0v-6" fill="none" stroke="#777" strokeWidth="1.800" /><Camera x={2} y={7} /></g>,
  camEdit: <g><Camera x={1} y={3} /><path d="M16 16l4-3 12 15 1 6-6-3z" fill="#e0ac18" stroke={OL} strokeWidth="1.200" /></g>,
  plus: <g><Sel /><path d="M15 10h5v5h5v6h-5v5h-5v-5h-5v-6h5z" fill={GR} {...st} /></g>,
  minus: <g><Sel /><rect x="9" y="15" width="16" height="6" fill="#ee1c25" stroke={OL} /></g>,
  toggle: <g><Sel /><path d="M11 7h4v4h4v4h-4v4h-4v-4H7v-4h4z" fill={GR} {...st} strokeWidth="1.400" /><rect x="7" y="22" width="13" height="5" fill="#ee1c25" stroke={OL} /><Cursor x={22} y={23} s={0.8} /></g>,
  selCell: <g><Sel /><path d="M17 8l9 17H8z" fill={GR} {...st} /><Cursor x={22} y={23} s={0.8} /></g>,
  selPt: <g><Sel /><path d="M18 7l8 18H8z" fill="none" stroke="#ccc" strokeWidth="1.500" /><circle cx="17" cy="8" r="2.700" fill={RE} stroke={OL} /><circle cx="8" cy="25" r="2.700" fill={RE} stroke={OL} /><Cursor x={22} y={23} s={0.8} /></g>,
  frustCell: <g><path d="M2 3v25l24 5" {...dash} /><path d="M7 13L18 3l14 5v11l-6 3H11l-4-3z" fill={GR} stroke="#5b8f3a" strokeWidth="1.800" /><path d="M7 13l12 2 13-7M19 15v7" fill="none" stroke="#5b8f3a" strokeWidth="1.600" /><Cursor x={17} y={24} s={0.8} /></g>,
  frustPt: <g><path d="M2 3h18M2 3v25l12 4" {...dash} /><path d="M8 12L20 3l12 5v14H8zM8 12h14v10M22 12l10-4" fill="none" stroke="#bbb" strokeWidth="1.500" />{[[20, 3], [32, 8], [8, 12], [14, 14], [32, 21], [8, 21], [14, 22]].map(([x, y]) => <circle key={x + "-" + y} cx={x} cy={y} r="1.800" fill={RE} />)}<Cursor x={18} y={25} s={0.8} /></g>,
  polyCell: <g><Lasso /><path d="M5 18l11-7v13z" fill={GR} {...st} /></g>,
  polyPt: <g><Lasso />{[[7, 10], [21, 9], [14, 14], [7, 19], [15, 23], [23, 26]].map(([x, y]) => <circle key={x + "-" + y} cx={x} cy={y} r="2.400" fill={RE} stroke={OL} />)}</g>,
  block: <g><Sel /><circle cx="10" cy="11" r="4.200" fill={BL} stroke={OL} /><circle cx="10" cy="25" r="4.200" fill={BL} stroke={OL} /><circle cx="22" cy="20" r="6" fill={GR} {...st} /><Cursor x={21} y={23} s={0.8} /></g>,
  frustBlock: <g><path d="M1 3h20M2 3v25l24 5" {...dash} /><path d="M7 13L18 3l14 5v13H12l-5-3z" fill={GR} stroke="#5b8f3a" strokeWidth="1.800" /><path d="M7 13l12 1 13-6M12 14v7" fill="none" stroke="#5b8f3a" strokeWidth="1.500" />{[[17, 9, YE], [11, 16, YE], [20, 17, YE], [6, 7, BL], [5, 23, BL]].map(([x, y, c]: any) => <circle key={x + "-" + y} cx={x} cy={y} r="2" fill={c} stroke={OL} strokeWidth=".6" />)}<Cursor x={18} y={26} s={0.8} /></g>,
  interCell: <g stroke="#aaa" strokeWidth="1.800" fill="#d6d6d6"><path d="M4 15L16 4h13L29 18 20 31H4z" /><path d="M4 15h16v16M20 15l9-11" fill="none" />{[[4, 15], [16, 4], [29, 4], [20, 15], [4, 31], [20, 31], [29, 18]].map(([x, y]) => <circle key={x + "-" + y} cx={x} cy={y} r="1.500" fill="#999" stroke="#999" />)}<Cursor x={22} y={23} s={0.8} c="#a5a5a5" /></g>,
  hoverOff: <g><circle cx="17" cy="18" r="4.500" fill="#d4d4d4" stroke="#aaa" strokeWidth="1.600" /><Cursor x={22} y={23} s={0.8} c="#aaa" /></g>,
  hoverCell: <g><path d="M17 8l9 17H7z" fill={GR} {...st} /><Cursor x={22} y={23} s={0.8} /></g>,
  hoverPt: <g><path d="M17 8l9 17H7z" fill="none" stroke="#ccc" strokeWidth="1.500" /><circle cx="17" cy="8" r="2.600" fill={RE} stroke={OL} /><circle cx="7" cy="25" r="2.600" fill={RE} stroke={OL} /><Cursor x={22} y={23} s={0.8} /></g>,
  askCell: <g><path d="M11 16l9 15H2z" fill={GR} stroke="#6a9a48" strokeWidth="1.600" /><Quest /><circle cx="25" cy="25" r="1.600" fill={OL} /></g>,
  askPt: <g><circle cx="10" cy="27" r="5" fill={RE} {...st} /><Quest /><circle cx="25" cy="25" r="1.600" fill={OL} /></g>,
  grow: <path d="M12 4h9v10h10v9H21v10h-9V23H2v-9h10z" fill="#a5a5a5" stroke="#bbb" />,
  shrink: <rect x="2" y="13" width="29" height="10" fill="#a5a5a5" stroke="#bbb" />,
  trash: <g stroke="#aaa" strokeWidth="1.200"><rect x="12" y="0" width="9" height="5" fill="none" stroke="#888" strokeWidth="2" /><path d="M5 9h24l-1 25H6z" fill="#cfcfcf" /><path d="M3 9q3-6 14-6t13 6z" fill="#a4a4a4" /><path d="M10 13v18M14 13v18M19 13v18M24 13v18" stroke="#9a9a9a" strokeWidth="1.800" /></g>,
};

const Tool = ({ n, label, on, size = 44 }: any) => (
  <ToolButton aria-label={label || n} $on={on} aria-pressed={on}><Icon width={size} height={size} viewBox="0 0 44 44">{I[n]}</Icon></ToolButton>
);
const Tools = ({ list }: { list: string }) => <>{list.split(" ").map((n, i) => (n === "|" ? <Divider key={i} /> : <Tool key={n} n={n} />))}</>;
const Small = ({ n }: { n: string }) => (
  <SmallButton aria-label={n + " color map"} disabled><Icon width="32" height="32" viewBox="0 0 44 44">{I[n]}</Icon></SmallButton>
);

const FloatIcon = () => (
  <Icon width="22" height="22" viewBox="0 0 22 22" fill="none" stroke="#6b6b66"><rect x="1" y="1" width="20" height="20" rx="3" strokeWidth="1.800" /><rect x="5" y="9" width="8" height="8" strokeWidth="1.600" /><path d="M9 8V5h8v8h-3" strokeWidth="1.600" /></Icon>
);
const CloseIcon = () => (
  <Icon width="22" height="22" viewBox="0 0 22 22" fill="none" stroke="#6b6b66"><rect x="1" y="1" width="20" height="20" rx="3" strokeWidth="1.800" /><path d="M6 6l10 10M16 6L6 16" strokeWidth="4" /></Icon>
);
const WindowIcon = ({ s = 32 }: any) => (
  <Icon width={s} height={s} viewBox="0 0 36 36"><rect width="36" height="36" fill="#343537" /><rect x="3" y="11" width="29" height="22" fill="#fdfdfd" stroke="#888" /></Icon>
);
const Points = () => (
  <Icon width="28" height="28" viewBox="0 0 28 28" fill={YE} stroke="#a58a30" strokeWidth="1.200"><circle cx="6" cy="5" r="4" /><circle cx="21" cy="8" r="4" /><circle cx="9" cy="20" r="4" /><circle cx="24" cy="23" r="4" /></Icon>
);

const menus: [string, string, string][] = [["", "F", "ile"], ["", "E", "dit"], ["", "V", "iew"], ["", "S", "ources"], ["Fi", "l", "ters"], ["E", "x", "tractors"], ["", "T", "ools"], ["", "C", "atalyst"], ["", "M", "acros"], ["", "H", "elp"]];

const viewTools = "camUndo camRedo | capture | 3D camEdit | plus minus toggle | selCell selPt frustCell frustPt polyCell polyPt block frustBlock interCell hoverOff hoverCell hoverPt askCell askPt grow shrink trash".split(" ");

const DockHead = ({ title }: any) => (
  <PaneHead>
    <PaneTitle>{title}</PaneTitle>
    <TinyButton aria-label={"Float " + title}><FloatIcon /></TinyButton>
    <TinyButton aria-label={"Close " + title}><CloseIcon /></TinyButton>
  </PaneHead>
);

const Mesh = ({ cells = 20, size = 1117 }: any) => {
  const step = size / cells;
  const lines = Array.from({ length: cells + 1 }, (_, i) => `M${i * step} 0V${size}M0 ${i * step}H${size}`).join("");
  return (
    <Icon width={size} height={size} viewBox={`0 0 ${size} ${size}`} role="img" aria-label="Surface mesh">
      <rect width={size} height={size} fill="#c8c5bc" />
      <path d={lines} stroke="#2f2f9c" strokeWidth="1.500" />
    </Icon>
  );
};

export default function App() {
  return (
    <Window>
      <Global />
      <TitleBar>
        <Icon width="24" height="17" viewBox="0 0 24 17"><path d="M5 0h5L5 17H0z" fill="#b5242c" /><path d="M12 0h5l-5 17H7z" fill="#2b9747" /><path d="M19 0h5l-5 17h-5z" fill="#0f4d91" /></Icon>
        <TitleText>ParaView 5.12.0-683-g8b3f13a473 (master)</TitleText>
        <WindowButton aria-label="Minimize"><Icon width="15" height="15"><path d="M0 7.500h15" stroke="#000" /></Icon></WindowButton>
        <WindowButton aria-label="Maximize"><Icon width="15" height="15"><path d="M.5.5h14v14H.5z" fill="none" stroke="#000" /></Icon></WindowButton>
        <WindowButton aria-label="Close"><Icon width="15" height="15"><path d="M0 0l15 15M15 0L0 15" stroke="#000" /></Icon></WindowButton>
      </TitleBar>
      <MenuBar>
        {menus.map(([a, b, c]) => <MenuItem key={b + c}>{a}<u>{b}</u>{c}</MenuItem>)}
        <MenuFill />
      </MenuBar>

      <ToolRow>
        <Group><Handle /><Tools list="open recent save full flask | connect disconnect reload | undo redo | apply search palette" /></Group>
        <Group><Handle /><Tools list="first prev back play next last loop" /></Group>
        <Group>
          <Handle />
          <label htmlFor="time">Time:</label>
          <TimeBox><Field id="time" $w={110} $h={36} defaultValue="0" /><TimeDrop aria-label="Time values"><Tri /></TimeDrop></TimeBox>
          <Spin>
            <SpinInput aria-label="Time step" defaultValue="0" />
            <SpinArrows><SpinButton aria-label="Step up"><Tri up /></SpinButton><SpinButton aria-label="Step down"><Tri c="#a8a8a8" /></SpinButton></SpinArrows>
          </Spin>
        </Group>
        <Group><Handle /><Tools list="camAdjust camAdd" /></Group>
      </ToolRow>

      <ToolRow>
        <Group>
          <Handle />
          <Tools list="lut editLut chain rescale rescaleC rescaleT rescaleV" />
          <Row $gap={8}>
            <Combo label="Color array" value="Solid Color" w={300} h={47} dot />
            <Combo label="Color component" value="" w={144} off />
          </Row>
        </Group>
        <Group><Handle /><Combo label="Representation style" value="Surface With Edges" w={300} /></Group>
        <Group><Handle /><Tools list="reset closest zoomData zoomClosest zoomBox px mx py my pz mz iso rotP rotM" /></Group>
        <Group><Handle /><Tool n="axes" on /><Tools list="centerAxes resetCenter pickCenter" /></Group>
        <Group><Handle /><Tool n="bulb" on /></Group>
        <Group><Handle /></Group>
      </ToolRow>

      <ToolRow $short>
        <Group $wide><Handle /><Tools list="calc contour clip slice thresh subset glyph stream warp group level" /></Group>
        <Group $wide><Handle /><Tools list="box extract histo plotTime plotLine plotSel probe braces" /></Group>
        <Group $wide><Handle /><Tools list="ruler protractor" /></Group>
      </ToolRow>

      <Body>
        <Dock>
          <Pane $grow={682}>
            <DockHead title="Pipeline Browser" />
            <Tree>
              <TreeRow>
                <EyeSlot />
                <TreeItem>
                  <Icon width="30" height="48" viewBox="0 0 30 48"><path d="M15 0v7M15 43v5" stroke="#888" strokeWidth="1.500" /><rect x="8" y="10" width="15" height="28" fill="#aaa" stroke="#26282c" strokeWidth="2.400" /><path d="M11 15h8v3h-8z" fill="#111" /><path d="M11 25h8M11 29h8M11 33h8" stroke="#777" strokeWidth="2" /></Icon>
                  builtin:
                </TreeItem>
              </TreeRow>
              <TreeRow>
                <EyeSlot><Icon width="30" height="20" viewBox="0 0 30 20"><path d="M1 10Q7 1 15 1t14 9q-6 9-14 9T1 10z" fill="#fff" stroke="#888" strokeWidth="1.800" /><circle cx="15" cy="10" r="8.500" fill="#2a93d5" /><circle cx="16" cy="10" r="5" fill="#111" /><circle cx="12" cy="6" r="2.500" fill="#fff" /></Icon></EyeSlot>
                <TreeItem $on>
                  <Icon width="30" height="30" viewBox="0 0 44 44"><g stroke="#6c7a62" strokeWidth="2"><path d="M2 6l22-5 18 6-22 8z" fill="#78a868" /><path d="M2 6l18 9v28L2 36z" fill="#648a5c" /><path d="M20 15l22-8v28l-22 8z" fill="#8fcb7c" /></g></Icon>
                  block.cgns
                </TreeItem>
              </TreeRow>
            </Tree>
          </Pane>

          <Pane $grow={1048}>
            <SplitterH />
            <Tabs role="tablist"><Tab role="tab" $on $w={166}>Properties</Tab><Tab role="tab" $w={178}>Information</Tab></Tabs>
            <DockHead title="Properties" />
            <Stack>
              <Row>
                <Button disabled><Icon width="26" height="26" viewBox="0 0 44 44"><MiniServer c="#d0d0d0" g="#c0c0c0" /></Icon>Apply</Button>
                <Button disabled><Icon width="28" height="28" viewBox="0 0 28 28" fill="none" stroke="#9a9a9a" strokeWidth="4.500"><circle cx="14" cy="14" r="11" /><path d="M6 22L22 6" /></Icon>Reset</Button>
                <Button><Icon width="22" height="22" viewBox="0 0 22 22"><path d="M1 5l5-4 5 5 5-5 5 4-5 6 5 6-5 4-5-5-5 5-5-4 5-6z" fill="#ee1c25" stroke="#8a4a3a" /></Icon>Delete</Button>
                <Button aria-label="Help"><Icon width="20" height="30" viewBox="0 0 20 30" fill="none"><path d="M2 9q0-7 8-7t8 7q0 4-5 7-3 2-3 6" stroke={OL} strokeWidth="5" /><path d="M2 9q0-7 8-7t8 7q0 4-5 7-3 2-3 6" stroke={GR} strokeWidth="2.800" /><circle cx="10" cy="27" r="2.400" fill={GR} stroke={OL} /></Icon></Button>
              </Row>
              <Row $mt={12}>
                <Field $h={44} aria-label="Search" placeholder="Search ... (use Esc to clear text)" />
                <GearButton aria-label="Advanced"><Icon width="28" height="28" viewBox="0 0 28 28"><path d="M11 1h6l1 4 3 2 4-1 3 5-3 3 3 3-3 5-4-1-3 2-1 4h-6l-1-4-3-2-4 1-3-5 3-3-3-3 3-5 4 1 3-2z" fill="#cdcdcd" stroke="#8c8c8c" strokeWidth="1.500" /><circle cx="14" cy="14" r="4.500" fill="#f6f6f6" stroke="#8c8c8c" strokeWidth="1.500" /></Icon></GearButton>
              </Row>
              <Scroll>
                <ScrollBody>
                  <ArrayList>
                    <ArrayRow><CheckBox /><Points />U</ArrayRow>
                    <ArrayRow><CheckBox /><Points />p</ArrayRow>
                  </ArrayList>
                  <Row $gap={8} $mt={9}><label htmlFor="Data Location">Data Location</label><Combo label="Data Location" value="Cell Data" h={43} /></Row>
                  <Row $mt={5}><CheckRow><CheckBox defaultChecked />Load Mesh</CheckRow></Row>
                  <Row><CheckRow><CheckBox />Load Patches</CheckRow></Row>
                  <Row $gap={9} $mt={8}>
                    <Expander><Icon width="26" height="10"><rect x=".5" y=".5" width="25" height="9" fill={BL} stroke="#808070" /></Icon><span>Display (UnstructuredGridRepresentation)</span></Expander>
                    <SmallButton aria-label="Copy"><Icon width="30" height="30" viewBox="0 0 30 30" fill="#d2d6d4" stroke="#888" strokeWidth="1.400"><path d="M12 1h12l5 5v15H12z" /><path d="M2 9h11l5 5v15H2z" /><path d="M5 15h9M5 19h9M5 23h9M20 11h6M20 15h6" /></Icon></SmallButton>
                    <SmallButton aria-label="Paste" disabled><Icon width="30" height="30" viewBox="0 0 30 30" fill="#c4c4c4" stroke="#999" strokeWidth="1.400"><rect x="13" y="4" width="16" height="22" rx="2" /><path d="M17 5q4-7 8 0z" /><path d="M2 10h11l5 5v14H2z" fill="#dedede" /><path d="M5 16h9M5 20h9M5 24h9" /></Icon></SmallButton>
                    <SmallButton aria-label="Restore defaults"><Icon width="28" height="28" viewBox="0 0 28 28" fill={BL} stroke="#5b7078" strokeWidth="1"><path d="M1 13C1 2 15-3 22 4l4-3v11H15l4-4c-6-4-12-1-14 5z" /><path d="M27 15c0 11-14 16-21 9l-4 3V16h11l-4 4c6 4 12 1 14-5z" /></Icon></SmallButton>
                    <SmallButton aria-label="Save as default"><Icon width="28" height="30" viewBox="0 0 28 30"><path d="M1 1h26v28H4l-3-3z" fill="#3a6fc0" stroke="#24508f" strokeWidth="1.500" /><rect x="6" y="2" width="16" height="14" fill="#fff" /><rect x="7" y="20" width="14" height="9" fill="#ccd" /><rect x="9" y="21" width="4" height="6" fill="#111" /></Icon></SmallButton>
                  </Row>
                  <Row $gap={9} $mt={14}><label htmlFor="Representation">Representation</label><Combo label="Representation" value="Surface With Edges" h={43} /></Row>
                  <Row $mt={17}><Fill><Section>Coloring</Section></Fill></Row>
                  <Row $gap={8} $mt={12}><Combo label="Coloring" value="Solid Color" w={368} h={47} dot /><Combo label="Coloring component" value="" w={367} h={43} off /></Row>
                  <Row $gap={9} $mt={9}>
                    <Button><Icon width="28" height="28" viewBox="0 0 44 44"><Rainbow /></Icon>Edit</Button>
                    <Small n="chain" /><Small n="rescale" /><Small n="rescaleC" /><Small n="rescaleT" />
                    <SmallButton aria-label="Choose preset" disabled><Icon width="30" height="30" viewBox="0 0 30 30"><path d="M1 24V4h3l2-3h7l2 3h11v20z" fill="#e2e2e2" stroke="#999" strokeWidth="1.400" /><path d="M5 9h23v14H5z" fill="#ececec" stroke="#aaa" /><path d="M18 30l-9-10q-3-5 1-8 5-2 8 3 3-5 8-3 4 3 1 8z" fill="#8f8f8f" /></Icon></SmallButton>
                    <Small n="lut" />
                    <SmallButton aria-label="Edit color legend" disabled><Icon width="32" height="32" viewBox="0 0 44 44"><LutBar x={12} w={22} /><text x="22" y="43" fontFamily="Liberation Serif" fontStyle="italic" fontWeight="700" fontSize="40" fill="#444">e</text></Icon></SmallButton>
                  </Row>
                  <Row $mt={16}><Fill><Section>Styling</Section></Fill></Row>
                  <Row $gap={0} $mt={11}><SliderLabel htmlFor="opacity">Opacity</SliderLabel><Slider id="opacity" $full defaultValue="100" /><Field aria-label="Opacity value" defaultValue="1" /></Row>
                  <Row $mt={17}><Fill><Section>Lighting</Section></Fill></Row>
                  <Row $gap={0} $mt={11}><SliderLabel htmlFor="specular">Specular</SliderLabel><Slider id="specular" defaultValue="0" /><Field aria-label="Specular value" defaultValue="0" /></Row>
                  <Row $mt={17}><Fill><Section>Edge Styling</Section></Fill></Row>
                  <Row $gap={2} $mt={11}>
                    <Button aria-label="Edge color"><EdgeDot width="24" height="24"><circle cx="12" cy="12" r="11" fill="#00007f" stroke="#111" /></EdgeDot></Button>
                    <EdgeMore aria-label="Edge color options" />
                  </Row>
                </ScrollBody>
                <Bar>
                  <BarEnd aria-label="Scroll up"><Tri up /></BarEnd>
                  <Gap $grow={150} /><Thumb /><Gap $grow={346} />
                  <BarEnd aria-label="Scroll down"><Tri /></BarEnd>
                </Bar>
              </Scroll>
            </Stack>
          </Pane>
        </Dock>
        <SplitterV />

        <Main>
          <ViewTabs>
            <ViewTab $on><WindowIcon /><span>Layout #1</span><TinyButton aria-label="Close layout"><CloseIcon /></TinyButton></ViewTab>
            <ViewTab><TinyButton aria-label="New layout">+</TinyButton></ViewTab>
          </ViewTabs>
          <Frame>
            <ViewTools>
              {viewTools.map((n, i) => n === "|" ? <Divider key={i} $h={26} /> : n === "3D" ? <ViewTool key={i}>3D</ViewTool> : (
                <ViewTool key={i} aria-label={n}><Icon width="34" height="34" viewBox="0 0 34 34">{V[n]}</Icon></ViewTool>
              ))}
              <ViewName href="#view">RenderView1</ViewName>
              <FrameButton aria-label="Split horizontal"><Icon width="27" height="27"><path d="M1 1h25v25H1zM13.500 1v25" fill="#d0d6ea" stroke="#858585" strokeWidth="1.800" /></Icon></FrameButton>
              <FrameButton aria-label="Split vertical"><Icon width="27" height="27"><path d="M1 1h25v25H1zM1 13.500h25" fill="#d0d6ea" stroke="#858585" strokeWidth="1.800" /></Icon></FrameButton>
              <FrameButton aria-label="Maximize view"><WindowIcon s={36} /></FrameButton>
              <FrameButton aria-label="Close view"><CloseIcon /></FrameButton>
            </ViewTools>
            <Viewport>
              <Mesh />
              <Axes width="160" height="140" viewBox="0 0 160 140">
                <path d="M32 30v80" stroke="#e0e000" strokeWidth="1.500" /><path d="M32 8l8 22q-8 3-16 0z" fill="#e4e400" /><path d="M24 30q8 4 16 0" stroke="#222" strokeWidth="1.500" fill="none" />
                <path d="M32 121h92" stroke="#e80c0c" strokeWidth="1.500" /><circle cx="32" cy="121" r="10.500" fill="#006400" />
                <g fill="#fff" fontFamily="Liberation Sans" fontSize="34"><text x="35" y="32">Y</text><text x="38" y="122">Z</text><text x="126" y="122">X</text></g>
                <path d="M122 112l22 9-22 9z" fill="#f20000" /><path d="M122 112q-3 9 0 18" stroke="#222" strokeWidth="1.500" fill="none" />
              </Axes>
              <Watermark>CSDN @猿核试Bug愁</Watermark>
            </Viewport>
          </Frame>
        </Main>
      </Body>
    </Window>
  );
}
